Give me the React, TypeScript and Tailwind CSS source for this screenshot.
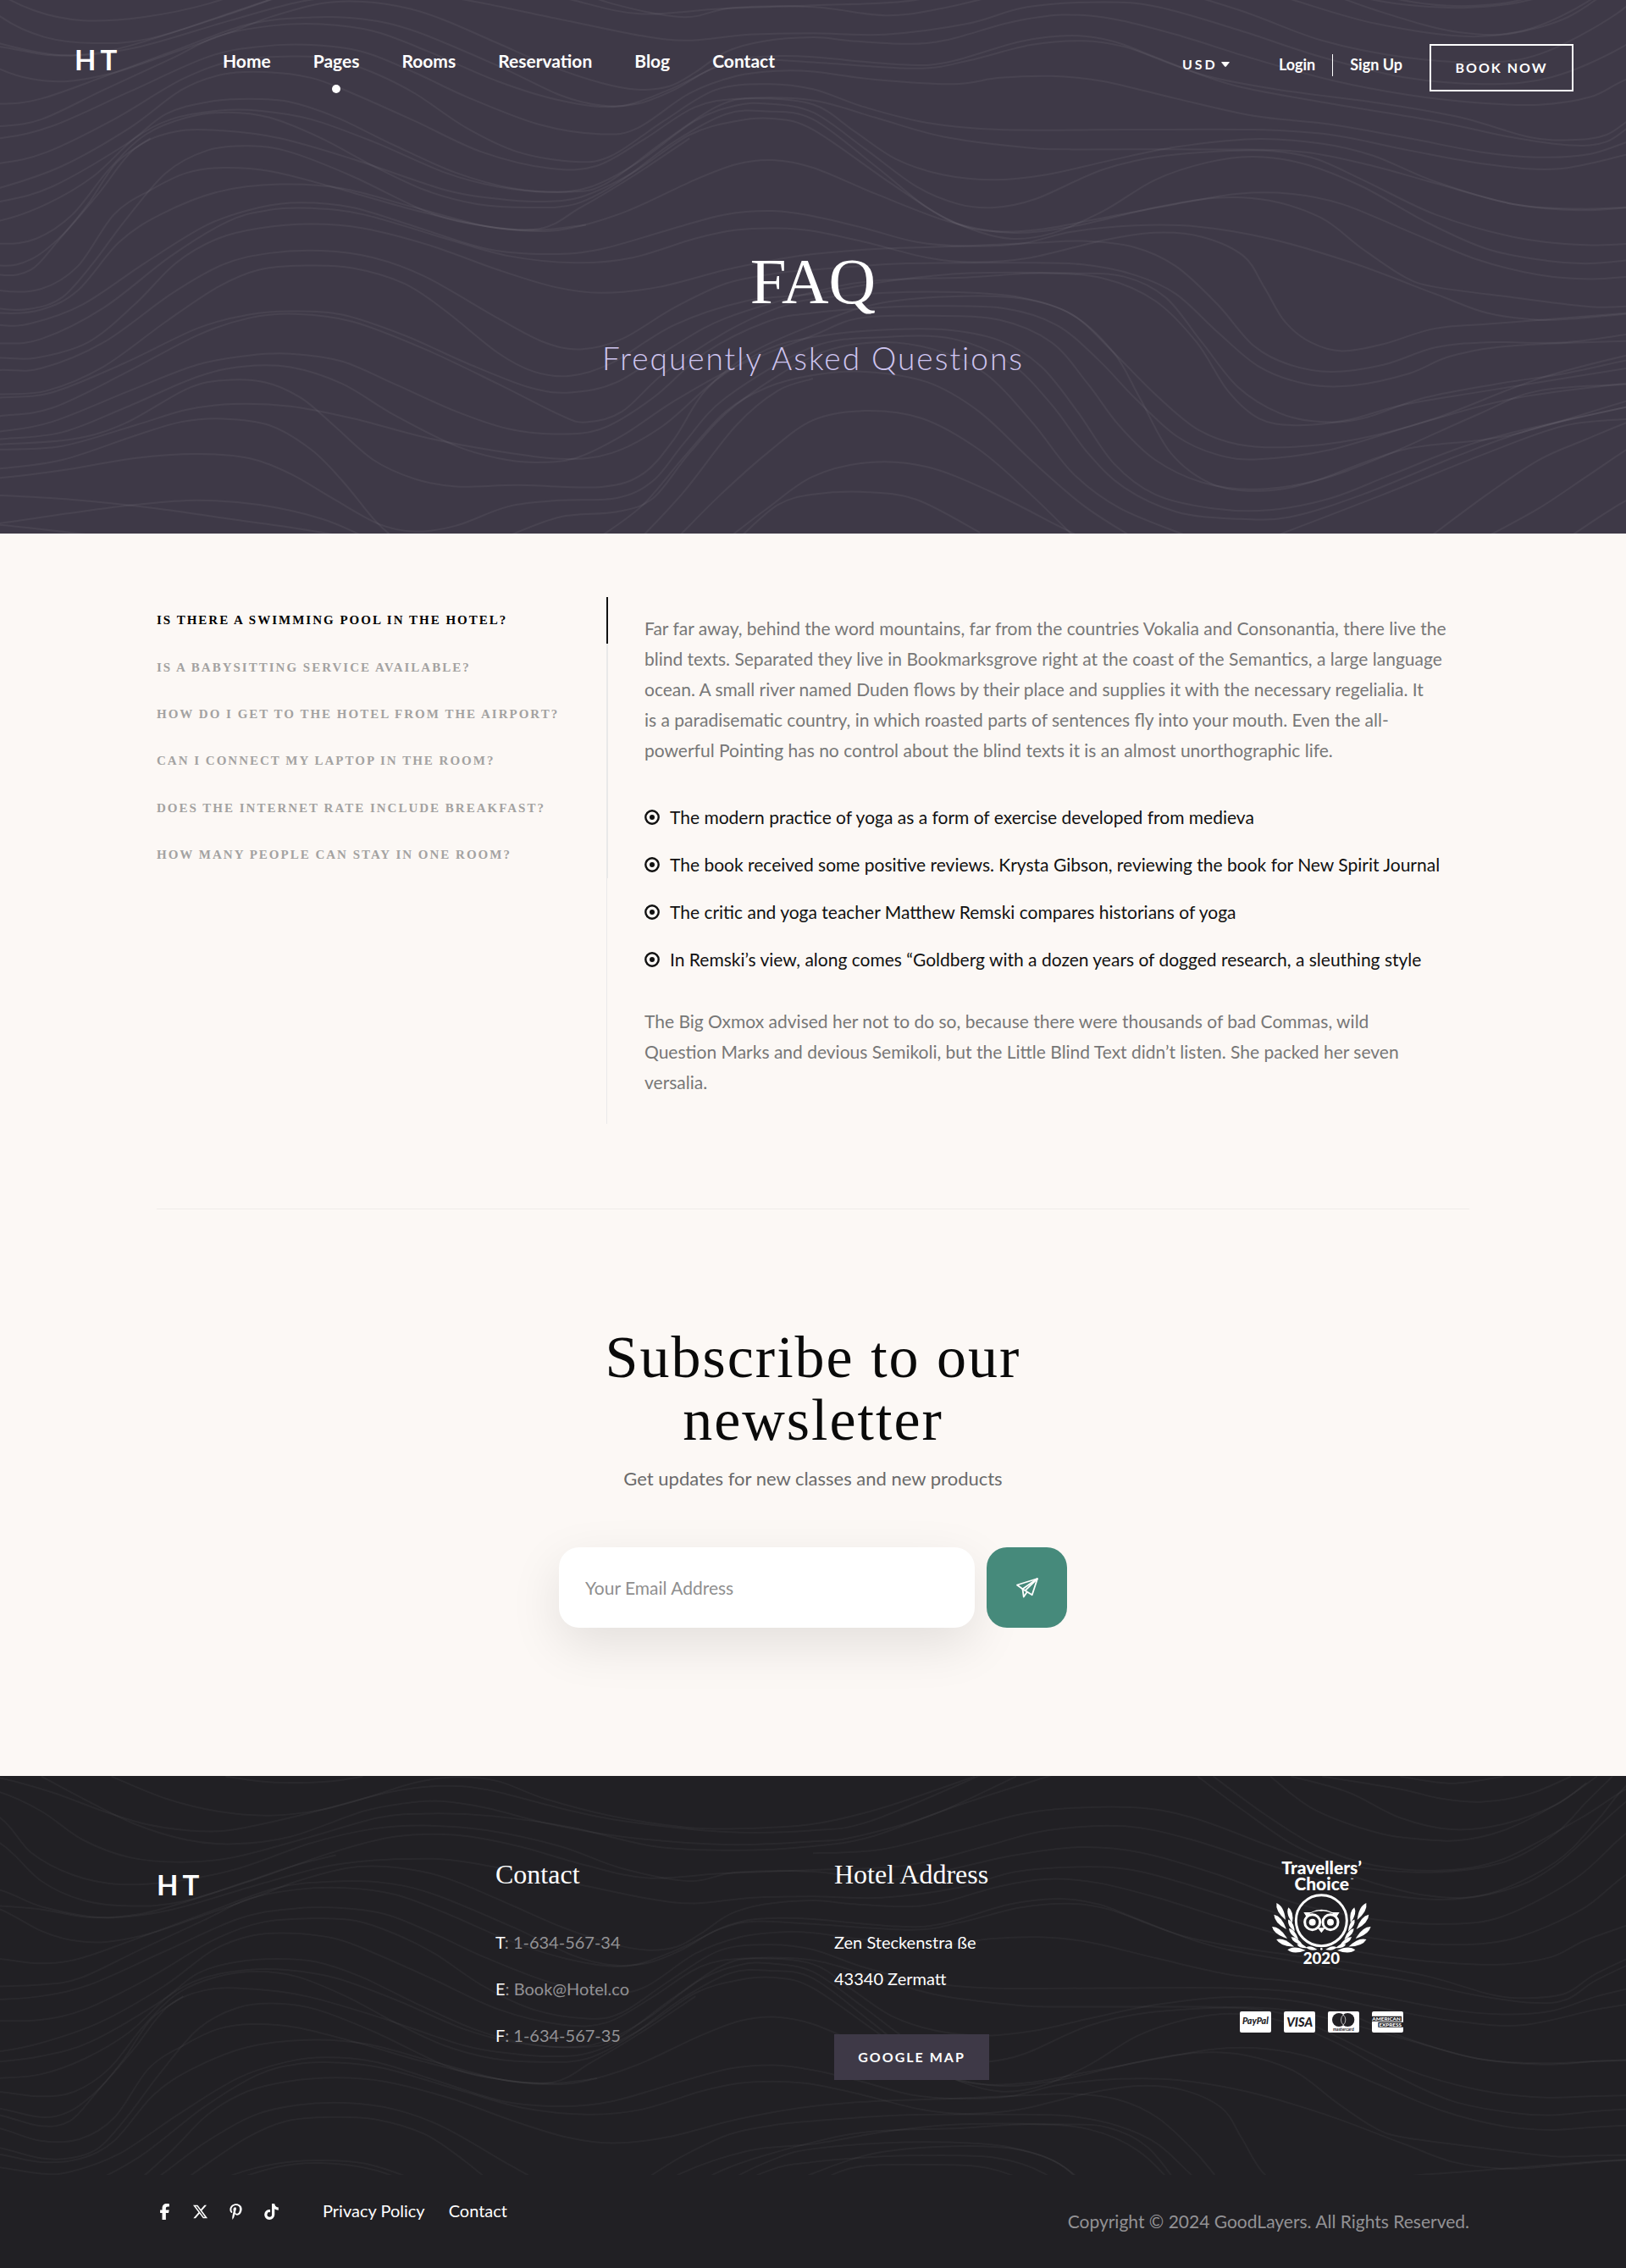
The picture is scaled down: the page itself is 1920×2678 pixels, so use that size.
import { useState } from "react";
import { FaFacebookF, FaPinterestP, FaTiktok, FaXTwitter } from "react-icons/fa6";

type Pt = [number, number];

/* Contour lines, drawn on a 3136 x 1543 canvas that is stretched over a section. */
const LINES: Pt[][] = [
  [[0, 135], [100, 160], [200, 150], [300, 110], [420, 50], [520, 0], [600, -30]],
  [[-90, 130], [0, 200], [60, 228], [130, 235], [220, 210], [320, 160], [450, 90], [520, 50], [620, 10], [700, 5], [790, 25], [860, 60], [960, 125], [1060, 190], [1160, 240], [1230, 259], [1290, 250], [1340, 210], [1400, 150], [1470, 120], [1568, 108], [1640, 118], [1748, 127], [1828, 115], [1948, 65], [2048, 43], [2148, 55], [2268, 100], [2418, 170], [2568, 232], [2718, 275], [2848, 297], [2968, 303], [3068, 280], [3136, 230]],
  [[-90, 285], [0, 300], [80, 285], [200, 222], [330, 150], [480, 70], [600, 50], [700, 55], [800, 90], [960, 190], [1080, 275], [1160, 305], [1230, 300], [1300, 260], [1370, 200], [1430, 170], [1500, 162], [1568, 165], [1738, 187], [1828, 180], [1968, 120], [2068, 103], [2148, 120], [2228, 165], [2328, 220], [2468, 260], [2668, 300], [2818, 340], [2948, 396], [3028, 405], [3098, 390], [3160, 330]],
  [[-90, 370], [0, 365], [80, 345], [200, 260], [330, 170], [420, 105], [520, 75], [620, 70], [720, 90], [820, 145], [960, 235], [1080, 290], [1190, 308], [1290, 260], [1380, 195], [1450, 172], [1568, 180], [1768, 198], [1868, 175], [1988, 130], [2088, 118], [2168, 135], [2268, 190], [2388, 250], [2568, 300], [2768, 350], [2908, 395], [3028, 420], [3098, 410], [3160, 350]],
  [[-90, 410], [0, 400], [100, 365], [250, 265], [400, 165], [500, 135], [600, 130], [700, 150], [800, 210], [900, 280], [1040, 360], [1160, 388], [1230, 370], [1330, 270], [1420, 220], [1500, 205], [1568, 207], [1688, 230], [1838, 243], [1928, 225], [2028, 220], [2128, 235], [2268, 285], [2418, 335], [2568, 360], [2718, 400], [2858, 440], [2968, 455], [3068, 445], [3160, 400]],
  [[-90, 475], [0, 472], [90, 440], [220, 345], [350, 230], [450, 175], [560, 163], [640, 170], [720, 210], [800, 270], [900, 370], [1000, 440], [1110, 468], [1180, 450], [1280, 350], [1380, 260], [1480, 243], [1568, 258], [1668, 310], [1788, 355], [1928, 375], [2168, 375], [2418, 375], [2568, 390], [2718, 435], [2868, 475], [3008, 488], [3160, 440]],
  [[-90, 570], [0, 543], [120, 480], [250, 370], [350, 260], [430, 215], [510, 208], [600, 225], [680, 270], [800, 350], [930, 440], [1060, 487], [1150, 480], [1240, 405], [1340, 310], [1430, 285], [1568, 290], [1688, 340], [1818, 395], [1968, 425], [2068, 432], [2368, 432], [2518, 440], [2648, 480], [2768, 530], [2918, 590], [3048, 608], [3160, 598]],
  [[-90, 600], [0, 583], [100, 540], [240, 420], [320, 330], [400, 295], [480, 286], [560, 295], [650, 340], [760, 420], [880, 500], [990, 545], [1100, 555], [1170, 530], [1280, 410], [1380, 310], [1450, 285], [1568, 302], [1648, 380], [1728, 460], [1818, 505], [1918, 520], [2018, 505], [2138, 465], [2268, 425], [2418, 402], [2548, 415], [2648, 450], [2768, 525], [2918, 590], [3048, 604], [3160, 598]],
  [[-90, 650], [0, 638], [90, 590], [180, 510], [260, 400], [330, 345], [420, 320], [500, 320], [600, 345], [720, 410], [860, 500], [960, 540], [1060, 555], [1140, 540], [1230, 470], [1340, 350], [1420, 305], [1480, 300], [1568, 325], [1668, 430], [1768, 540], [1848, 590], [1918, 600], [1998, 575], [2128, 490], [2248, 450], [2418, 435], [2528, 455], [2628, 520], [2768, 620], [2918, 685], [3048, 708], [3160, 704]],
  [[-90, 690], [0, 705], [70, 690], [140, 620], [210, 490], [280, 390], [360, 340], [440, 325], [520, 340], [620, 400], [720, 480], [820, 550], [920, 590], [1020, 600], [1110, 590], [1200, 520], [1300, 410], [1400, 330], [1480, 322], [1568, 345], [1688, 480], [1788, 600], [1868, 660], [1948, 690], [2028, 675], [2128, 610], [2228, 520], [2328, 470], [2418, 453], [2518, 475], [2628, 540], [2748, 640], [2868, 720], [2988, 755], [3068, 762], [3160, 750]],
  [[-90, 740], [0, 768], [60, 750], [120, 680], [190, 560], [260, 430], [340, 380], [430, 378], [540, 400], [680, 460], [860, 550], [960, 575], [1040, 583], [1120, 570], [1220, 500], [1330, 390], [1420, 350], [1490, 343], [1568, 375], [1718, 530], [1828, 635], [1908, 668], [2008, 663], [2128, 630], [2268, 590], [2388, 560], [2488, 560], [2588, 590], [2718, 670], [2848, 750], [2968, 795], [3068, 807], [3160, 798]],
  [[-90, 760], [0, 795], [60, 780], [110, 700], [170, 590], [225, 470], [290, 400]],
  [[-90, 800], [0, 840], [80, 835], [150, 770], [220, 620], [290, 550], [360, 500], [430, 485], [520, 495], [640, 540], [780, 600], [920, 650], [1020, 668], [1100, 660], [1210, 610], [1340, 520], [1420, 475], [1490, 463], [1568, 485], [1688, 560], [1828, 640], [1948, 673], [2068, 655], [2228, 600], [2348, 572], [2448, 580], [2548, 630], [2628, 720], [2708, 800], [2768, 830], [2918, 860], [3068, 887], [3160, 885]],
  [[-90, 860], [0, 893], [60, 893], [120, 860], [180, 760], [240, 640], [320, 500], [400, 435], [480, 422], [560, 440], [680, 510], [820, 610], [920, 650], [1040, 662], [1120, 600], [1220, 510], [1330, 400]],
  [[-90, 880], [0, 905], [80, 895], [150, 840], [230, 700], [310, 620], [420, 555], [540, 533], [660, 545], [800, 600], [940, 655], [1040, 665], [1130, 650]],
  [[-90, 920], [0, 940], [60, 935], [160, 880], [280, 760], [400, 650], [500, 600], [580, 586], [680, 600], [800, 655], [940, 720], [1060, 735], [1160, 720], [1300, 660], [1400, 620], [1490, 610], [1568, 625], [1668, 660], [1768, 700], [1868, 712], [1968, 705], [2068, 670], [2188, 652], [2308, 655], [2448, 690], [2608, 760], [2768, 850], [2868, 905], [2968, 925], [3048, 920], [3160, 905]],
  [[-90, 985], [0, 993], [80, 980], [200, 890], [330, 740], [440, 640], [520, 607], [600, 602], [700, 620], [860, 690], [980, 740], [1110, 760], [1220, 745], [1340, 690], [1420, 665], [1500, 660], [1568, 668], [1668, 700], [1788, 745], [1878, 758], [1988, 745], [2128, 695], [2228, 673], [2318, 685], [2398, 740], [2438, 830], [2478, 930], [2528, 990], [2588, 1015], [2668, 995], [2768, 950], [2888, 935], [3160, 903]],
  [[0, 1035], [70, 1035], [170, 990], [260, 880], [340, 760], [420, 690], [500, 660], [600, 648], [700, 660], [830, 710], [960, 780], [1070, 830], [1160, 847], [1270, 830], [1400, 780], [1500, 750], [1568, 735], [1688, 720], [1848, 712], [1988, 703], [2088, 697], [2188, 715], [2268, 770], [2348, 880], [2418, 1000], [2488, 1055], [2568, 1075], [2668, 1055], [2768, 1005], [2868, 990], [3018, 990], [3160, 963]],
  [[0, 1070], [80, 1065], [200, 990], [330, 850], [430, 765], [520, 732], [620, 725], [720, 745], [820, 800], [960, 920], [1050, 990], [1120, 1010], [1200, 980], [1300, 890], [1400, 820], [1500, 790], [1568, 780], [1748, 762], [1968, 760], [2088, 765], [2188, 795], [2268, 850], [2348, 960], [2428, 1060], [2518, 1110], [2608, 1115], [2718, 1080], [2798, 1030], [2918, 1000], [3160, 985]],
  [[0, 1140], [90, 1130], [200, 1060], [320, 930], [420, 830], [500, 780], [590, 768], [680, 775], [780, 820], [860, 900], [960, 1020], [1030, 1075], [1100, 1087], [1180, 1050], [1300, 940], [1440, 870], [1568, 850], [1718, 812], [1868, 790], [2068, 790], [2168, 800], [2248, 860], [2318, 990], [2388, 1120], [2468, 1195], [2548, 1220], [2628, 1210], [2748, 1150], [2888, 1110], [3018, 1080], [3160, 1035]],
  [[0, 1150], [100, 1135], [240, 1050], [380, 950], [480, 910], [560, 900], [660, 910], [780, 970], [900, 1050], [1020, 1120], [1100, 1135], [1190, 1105], [1300, 1000], [1400, 920], [1568, 845], [1688, 812], [1868, 802], [2008, 790], [2128, 805], [2228, 870], [2308, 990], [2368, 1130], [2428, 1210], [2498, 1230], [2598, 1215], [2708, 1170], [2868, 1130], [3160, 1060]],
  [[0, 1203], [100, 1180], [240, 1080], [380, 970], [480, 920], [570, 908], [680, 930], [820, 1010], [960, 1110], [1080, 1200], [1130, 1221], [1200, 1190], [1280, 1080], [1400, 960], [1500, 890], [1568, 865], [1708, 847], [1848, 845], [1968, 860], [2068, 910], [2148, 1020], [2228, 1140], [2308, 1240], [2388, 1285], [2488, 1293], [2618, 1270], [2768, 1210], [2968, 1095], [3160, 1020]],
  [[0, 1248], [100, 1220], [250, 1130], [380, 1055], [480, 1028], [560, 1023], [660, 1045], [760, 1110], [880, 1190], [980, 1240], [1070, 1255], [1160, 1240], [1260, 1150], [1360, 1020], [1480, 930], [1568, 905], [1688, 890], [1798, 885], [1938, 892], [2038, 940], [2118, 1040], [2188, 1150], [2268, 1260], [2348, 1315], [2428, 1328], [2568, 1300], [2748, 1220], [2928, 1150], [3160, 1105]],
  [[0, 1270], [120, 1250], [240, 1180], [380, 1090], [470, 1060], [560, 1062], [660, 1110], [760, 1200], [880, 1290], [960, 1325], [1030, 1337], [1110, 1325], [1200, 1260], [1300, 1160], [1420, 1060], [1568, 970], [1658, 920], [1798, 913], [1928, 925], [2028, 990], [2098, 1110], [2158, 1230], [2228, 1330], [2318, 1395], [2418, 1415], [2538, 1390], [2668, 1320], [2848, 1200], [2968, 1130], [3160, 1110]],
  [[0, 1285], [140, 1270], [240, 1225], [360, 1125], [430, 1100], [510, 1105], [580, 1150], [640, 1225], [720, 1330], [800, 1385], [880, 1407], [1000, 1403], [1160, 1408], [1240, 1370], [1300, 1270], [1360, 1130], [1450, 1020], [1568, 940], [1688, 880], [1828, 858], [1968, 863], [2068, 910], [2148, 1020], [2198, 1150], [2258, 1310], [2338, 1400], [2428, 1420], [2528, 1395], [2708, 1300], [2908, 1260], [3160, 1150]],
  [[0, 1300], [120, 1290], [260, 1230], [360, 1185], [450, 1168], [560, 1175], [680, 1210], [820, 1265], [940, 1300], [1080, 1327], [1180, 1310], [1280, 1230], [1380, 1100], [1480, 1010], [1568, 975], [1688, 955], [1818, 953], [1928, 985], [2008, 1060], [2078, 1190], [2148, 1340], [2228, 1430], [2338, 1470], [2448, 1475], [2568, 1440], [2688, 1370], [2868, 1270], [3160, 1170]],
  [[0, 1355], [120, 1330], [260, 1260], [350, 1220], [430, 1211], [520, 1230], [600, 1300], [660, 1390], [720, 1500], [755, 1550]],
  [[0, 1382], [120, 1360], [260, 1325], [380, 1313], [480, 1325], [560, 1370], [640, 1440], [730, 1515], [800, 1537], [880, 1520], [980, 1465], [1080, 1447], [1190, 1440], [1260, 1390], [1320, 1280], [1400, 1150], [1568, 1003], [1708, 975], [1838, 980], [1948, 1050], [2028, 1170], [2098, 1310], [2168, 1410], [2268, 1480], [2378, 1500], [2488, 1495], [2628, 1430], [2808, 1320], [2958, 1240], [3160, 1170]],
  [[0, 1433], [140, 1445], [300, 1470], [440, 1500], [560, 1525], [660, 1550]],
  [[0, 1513], [130, 1485], [260, 1460], [380, 1447], [500, 1460], [620, 1500], [700, 1550]],
  [[0, 1518], [190, 1550]],
  [[980, 1550], [1080, 1495], [1190, 1480], [1260, 1440], [1330, 1310], [1420, 1170], [1568, 1030], [1688, 990], [1800, 1010], [1900, 1080], [1990, 1220], [2070, 1370], [2160, 1470], [2290, 1550]],
  [[1160, 1550], [1240, 1460], [1320, 1320], [1400, 1190], [1480, 1120], [1568, 1085], [1668, 1075], [1788, 1105], [1888, 1190], [1988, 1330], [2088, 1460], [2180, 1550]],
  [[1240, 1550], [1320, 1420], [1420, 1230], [1500, 1130], [1568, 1095]],
  [[1310, 1550], [1390, 1430], [1480, 1310], [1568, 1215], [1668, 1188], [1778, 1210], [1888, 1300], [1988, 1430], [2070, 1550]],
  [[1410, 1550], [1480, 1470], [1568, 1378], [1678, 1337], [1788, 1350], [1908, 1420], [2040, 1520], [2080, 1550]],
  [[1430, 1550], [1500, 1460], [1568, 1430], [1668, 1423], [1768, 1445], [1890, 1540]],
  [[2460, 1550], [2668, 1430], [2868, 1310], [3020, 1230], [3160, 1210]],
  [[2760, 1550], [2868, 1430], [2968, 1330], [3060, 1270], [3160, 1210]],
  [[2870, 1550], [2968, 1470], [3068, 1370], [3160, 1280]],
  [[3030, 1550], [3100, 1480], [3160, 1430]],
];

/* The uppermost lines, which reach past the top edge of the canvas. */
const TOP_LINES: Pt[][] = [
  [[0, 25], [100, 70], [200, 130], [280, 170], [360, 190], [440, 190], [560, 150], [700, 90], [800, 40], [880, 22], [960, 35], [1050, 90], [1180, 145], [1320, 180], [1420, 185], [1568, 170], [1700, 120], [1880, 20]],
  [[80, 20], [160, 90], [260, 170], [360, 220], [450, 233], [560, 210], [700, 130], [780, 105], [850, 98], [940, 120], [1060, 170], [1200, 210], [1400, 235], [1568, 225], [1650, 210], [1800, 140], [1960, 20]],
  [[215, 20], [320, 90], [420, 130], [520, 143], [620, 125], [750, 70], [850, 50], [940, 62], [1080, 120], [1200, 160], [1400, 195], [1568, 190], [1680, 160], [1900, 10]],
  [[0, 70], [80, 130], [160, 220], [250, 275], [350, 290], [450, 275], [600, 210], [730, 150], [830, 137], [950, 145], [1100, 180], [1260, 240], [1420, 253], [1568, 240], [1680, 210], [1850, 110], [2040, 10]],
  [[0, 150], [60, 260], [140, 330], [230, 360], [340, 350], [460, 310], [600, 230], [720, 185], [820, 175], [940, 190], [1080, 240], [1200, 310], [1330, 350], [1420, 322], [1568, 320], [1700, 345], [1800, 325], [1950, 270], [2080, 243], [2200, 260], [2350, 330], [2500, 420], [2650, 470], [2790, 485], [2900, 460], [3040, 340], [3136, 200]],
  [[0, 230], [80, 350], [160, 410], [250, 428], [350, 415], [500, 340], [640, 260], [760, 210], [880, 205], [1000, 240], [1130, 300], [1250, 340], [1400, 325], [1568, 315], [1750, 300], [1900, 240], [2020, 190], [2170, 177], [2300, 220], [2450, 300], [2600, 370], [2770, 408], [2900, 380], [3000, 300], [3136, 100]],
  [[0, 378], [80, 430], [200, 465], [330, 440], [500, 360], [640, 300], [780, 280], [900, 290], [1100, 355], [1250, 405], [1340, 420], [1450, 402], [1568, 398], [1700, 402], [1850, 370], [1960, 320], [2100, 305], [2200, 320], [2350, 390], [2500, 470], [2650, 530], [2800, 550], [2920, 530], [3050, 440], [3136, 330]],
  [[1568, 262], [1700, 250], [1850, 190], [2000, 130], [2180, 117], [2300, 150], [2450, 240], [2600, 330], [2750, 395], [2870, 390], [3000, 290], [3080, 160], [3136, 50]],
  [[435, 20], [500, 35], [560, 40], [640, 35], [700, 20]],
  [[2310, 20], [2400, 130], [2500, 240], [2600, 300], [2760, 322], [2900, 290], [3000, 200], [3060, 100], [3110, 20]],
  [[2340, 20], [2440, 140], [2540, 240], [2650, 300], [2780, 316], [2900, 280], [3050, 150], [3136, 60]],
  [[2450, 20], [2530, 120], [2640, 190], [2720, 215], [2810, 222], [2900, 190], [3000, 110], [3080, 20]],
  [[2490, 20], [2600, 70], [2700, 150], [2800, 187], [2900, 170], [3000, 110], [3060, 40]],
  [[2550, 20], [2700, 60], [2780, 90], [2860, 100], [2950, 75], [3030, 20]],
  [[2700, 20], [2800, 42], [2900, 20]],
];

/* Carries a line that stops at the left or right edge a little further out. */
function extend(p: Pt[]): Pt[] {
  const out = [...p];
  const [a, b] = p;
  const [y, z] = p.slice(-2);
  if (a[0] <= 0) out.unshift([a[0] - 110, a[1] - ((b[1] - a[1]) * 50) / (b[0] - a[0])]);
  if (z[0] >= 3130) out.push([z[0] + 110, z[1] + ((z[1] - y[1]) * 80) / (z[0] - y[0])]);
  return out;
}

function smooth(line: Pt[]): string {
  const p = extend(line);
  let d = `M${p[0][0]} ${p[0][1]}`;
  for (let i = 0; i < p.length - 1; i++) {
    const a = p[i - 1] ?? p[i];
    const b = p[i];
    const c = p[i + 1];
    const e = p[i + 2] ?? c;
    d += `C${b[0] + (c[0] - a[0]) / 6} ${b[1] + (c[1] - a[1]) / 6} ${c[0] - (e[0] - b[0]) / 6} ${c[1] - (e[1] - b[1]) / 6} ${c[0]} ${c[1]}`;
  }
  return d;
}

function Waves({ viewBox, className }: { viewBox: string; className: string }) {
  return (
    <svg
      aria-hidden="true"
      viewBox={viewBox}
      preserveAspectRatio="none"
      className={className}
      fill="none"
      stroke="currentColor"
      strokeWidth="2"
    >
      {LINES.map((l, i) => (
        <path key={i} d={smooth(l)} vectorEffect="non-scaling-stroke" />
      ))}
      <g transform="matrix(1.0526 0 0 0.967 -82 -289)">
        {TOP_LINES.map((l, i) => (
          <path key={i} d={smooth(l)} vectorEffect="non-scaling-stroke" />
        ))}
      </g>
    </svg>
  );
}

const NAV = ["Home", "Pages", "Rooms", "Reservation", "Blog", "Contact"];

const QUESTIONS = [
  "Is there a swimming pool in the hotel?",
  "Is a babysitting service available?",
  "How do I get to the hotel from the airport?",
  "Can I connect my laptop in the room?",
  "Does the internet rate include breakfast?",
  "How many people can stay in one room?",
];

const INTRO = [
  "Far far away, behind the word mountains, far from the countries Vokalia and Consonantia, there live the",
  "blind texts. Separated they live in Bookmarksgrove right at the coast of the Semantics, a large language",
  "ocean. A small river named Duden flows by their place and supplies it with the necessary regelialia. It",
  "is a paradisematic country, in which roasted parts of sentences fly into your mouth. Even the all-",
  "powerful Pointing has no control about the blind texts it is an almost unorthographic life.",
];

const POINTS = [
  "The modern practice of yoga as a form of exercise developed from medieva",
  "The book received some positive reviews. Krysta Gibson, reviewing the book for New Spirit Journal",
  "The critic and yoga teacher Matthew Remski compares historians of yoga",
  "In Remski’s view, along comes “Goldberg with a dozen years of dogged research, a sleuthing style",
];

const OUTRO = [
  "The Big Oxmox advised her not to do so, because there were thousands of bad Commas, wild",
  "Question Marks and devious Semikoli, but the Little Blind Text didn’t listen. She packed her seven",
  "versalia.",
];

function Lines({ lines }: { lines: string[] }) {
  return (
    <p className="text-[21px] leading-9 text-[#777777]">
      {lines.map((l) => (
        <span key={l} className="block">
          {l}
        </span>
      ))}
    </p>
  );
}

function Header() {
  return (
    <header className="relative flex items-start pl-[88px] pr-[62px]">
      <a href="#" className="mt-[50px] w-[175px] text-[33px] font-bold leading-10 tracking-[5px]">
        HT
      </a>
      <nav className="mt-[60px] flex gap-[50px] text-[21px] font-bold leading-6">
        {NAV.map((n) => (
          <a key={n} href="#" className="flex flex-col items-center">
            {n}
            {n === "Pages" && <span className="mt-4 size-[10px] rounded-full bg-white" />}
          </a>
        ))}
      </nav>
      <div className="ml-auto mt-[52px] flex items-start">
        <div className="mt-3 flex items-center">
          <select
            aria-label="Currency"
            className="appearance-none bg-transparent text-base font-bold leading-6 tracking-[3px] text-white"
          >
            <option>USD</option>
          </select>
          <svg viewBox="0 0 10 6" className="ml-1 h-[6px] w-[10px]" fill="currentColor" aria-hidden="true">
            <path d="M1 0h8q1.400 0 .5 1L5.800 5.500q-.8.8-1.600 0L.5 1Q-.4 0 1 0Z" />
          </svg>
        </div>
        <a href="#" className="ml-[58px] mt-3 text-lg font-bold leading-6">
          Login
        </a>
        <span className="mx-5 mt-3 h-[26px] w-px bg-white" />
        <a href="#" className="mt-3 text-lg font-bold leading-6">
          Sign Up
        </a>
        <button
          type="button"
          className="ml-8 h-14 w-[170px] border-2 border-white text-base font-bold leading-6 tracking-[2px]"
        >
          BOOK NOW
        </button>
      </div>
    </header>
  );
}

function Hero() {
  return (
    <section className="relative h-[630px] overflow-hidden bg-[#3e3947] text-white">
      <Waves viewBox="0 0 3136 1543" className="absolute inset-0 size-full text-white/5" />
      <Header />
      <div className="relative pt-[177px] text-center">
        <h1 className="font-['Liberation_Serif',serif] text-[77px] leading-[90px]">FAQ</h1>
        <p className="mt-5 text-[37px] font-light leading-[52px] tracking-[2px] text-[#cfc5f0]">
          Frequently Asked Questions
        </p>
      </div>
    </section>
  );
}

function Faq() {
  const [active, setActive] = useState(0);
  return (
    <section className="mx-auto max-w-[1550px] pt-[75px]">
      <div className="flex items-start">
        <div className="relative z-10 grid h-[332px] w-[533px] shrink-0 grid-rows-6">
          {QUESTIONS.map((q, i) => (
            <button
              key={q}
              type="button"
              onClick={() => setActive(i)}
              className={
                i === active
                  ? "w-full border-r-2 border-[#111111] text-left font-['Liberation_Serif',serif] text-[15px] font-bold uppercase tracking-[2px] text-black"
                  : "w-full border-r-2 border-[#e9e9e9] text-left font-['Liberation_Serif',serif] text-[15px] font-bold uppercase tracking-[2px] text-[#a3a2a1]"
              }
            >
              {q}
            </button>
          ))}
        </div>
        <div className="-ml-[2px] border-l border-[#e9e9e9] pb-[31px] pl-11 pt-[19px]">
          <Lines lines={INTRO} />
          <ul className="mt-[33px] mb-[27px] text-[21px] leading-14 text-[#111111]">
            {POINTS.map((p) => (
              <li key={p} className="flex items-center gap-3">
                <svg viewBox="0 0 18 18" className="size-[18px] shrink-0" aria-hidden="true">
                  <circle cx="9" cy="9" r="7.700" fill="none" stroke="currentColor" strokeWidth="2.400" />
                  <circle cx="9" cy="9" r="3" fill="currentColor" />
                </svg>
                {p}
              </li>
            ))}
          </ul>
          <Lines lines={OUTRO} />
        </div>
      </div>
      <hr className="mt-[100px] border-[#efecea]" />
    </section>
  );
}

function Newsletter() {
  return (
    <section className="pb-[175px] pt-[138px] text-center">
      <h2 className="mx-auto max-w-[560px] font-['Liberation_Serif',serif] text-[70px] leading-[74px] tracking-[2px] text-[#0a0a0a]">
        Subscribe to our
        <br />
        newsletter
      </h2>
      <p className="mt-4 text-[22px] leading-8 text-[#6a6a6a]">Get updates for new classes and new products</p>
      <form className="mt-[65px] flex justify-center gap-[14px]" onSubmit={(e) => e.preventDefault()}>
        <input
          type="email"
          aria-label="Email address"
          placeholder="Your Email Address"
          className="h-[95px] w-[491px] rounded-3xl bg-white px-[31px] text-[21px] shadow-[0_20px_60px_rgba(0,0,0,0.1)] placeholder:text-[#8f8f8f]"
        />
        <button
          type="submit"
          aria-label="Subscribe"
          className="flex size-[95px] items-center justify-center rounded-3xl bg-[#468a7b] text-white"
        >
          <svg viewBox="0 0 26 24" className="h-6 w-[26px]" fill="none" stroke="currentColor" strokeWidth="1.800" strokeLinejoin="round" aria-hidden="true">
            <path d="M25 1 1 8.500l6.500 4.800 11.200 6.900L25 1Z" />
            <path d="M25 1 7.500 13.300 8.800 22.500l4-5.800" />
            <path d="M25 1 10.500 15.200" />
          </svg>
        </button>
      </form>
    </section>
  );
}

/* Laurel leaves of the left branch: centre, half length, half width, rotation. */
const LEAVES: [number, number, number, number, number][] = [
  [29, 180, 34, 9, 62],
  [62, 193, 28, 8, 76],
  [26, 217, 34, 9, 50],
  [24, 255, 34, 9, 38],
  [66, 230, 24, 7, 62],
  [44, 292, 34, 9, 22],
  [74, 260, 26, 7, 50],
  [86, 286, 26, 7, 35],
  [84, 317, 32, 9, 2],
  [104, 303, 20, 6, 20],
  [138, 311, 20, 6, 12],
];

function Badge() {
  return (
    <svg viewBox="0 0 345 366" className="h-[122px] w-[115px] overflow-visible" fill="#fff" role="img" aria-label="Travellers' Choice 2020">
      <g fontFamily="Lato, sans-serif" fontWeight="900" textAnchor="middle">
        <text x="173" y="48" fontSize="63">Travellers’</text>
        <text x="173" y="106" fontSize="63">Choice</text>
        <text x="281" y="72" fontSize="13">™</text>
        <text x="172" y="365" fontSize="56">2020</text>
      </g>
      <circle cx="172" cy="212" r="90" fill="none" stroke="#fff" strokeWidth="9" />
      <path d="M109 183h26q37-19 75 0h26l-9 14-17-10q-21-11-39-8-19-3-38 8l-15 10Z" />
      <circle cx="140" cy="218" r="27" fill="none" stroke="#fff" strokeWidth="9" />
      <circle cx="204" cy="218" r="27" fill="none" stroke="#fff" strokeWidth="9" />
      <circle cx="140" cy="218" r="12" />
      <circle cx="204" cy="218" r="12" />
      <path d="M158 238h28l-14 18Z" />
      {LEAVES.map(([x, y, a, b, r]) => (
        <path
          key={`${x}-${y}`}
          d={`M${-a} 0Q${-a / 3} ${-b * 2} ${a} 0Q${-a / 3} ${b * 2} ${-a} 0Z`}
          transform={`translate(${x} ${y}) rotate(${r})`}
        />
      ))}
      <g transform="translate(344 0) scale(-1 1)">
        {LEAVES.map(([x, y, a, b, r]) => (
          <path
            key={`${x}-${y}`}
            d={`M${-a} 0Q${-a / 3} ${-b * 2} ${a} 0Q${-a / 3} ${b * 2} ${-a} 0Z`}
            transform={`translate(${x} ${y}) rotate(${r})`}
          />
        ))}
      </g>
      <circle cx="172" cy="313" r="4" />
    </svg>
  );
}

function Payments() {
  return (
    <div className="mt-14 flex gap-[15px]">
      <svg viewBox="0 0 111 75" className="h-[25px] w-[37px]" role="img" aria-label="PayPal">
        <rect width="111" height="75" rx="6" fill="#fff" />
        <text x="55" y="46" fontSize="32" fontStyle="italic" fontWeight="900" fontFamily="Lato, sans-serif" textAnchor="middle" fill="#212024">PayPal</text>
      </svg>
      <svg viewBox="0 0 111 75" className="h-[25px] w-[37px]" role="img" aria-label="Visa">
        <rect width="111" height="75" rx="6" fill="#fff" />
        <text x="56" y="53" fontSize="44" fontStyle="italic" fontWeight="900" fontFamily="Lato, sans-serif" textAnchor="middle" fill="#212024">VISA</text>
      </svg>
      <svg viewBox="0 0 111 75" className="h-[25px] w-[37px]" role="img" aria-label="Mastercard">
        <rect width="111" height="75" rx="6" fill="#fff" />
        <circle cx="39" cy="30" r="24" fill="#212024" />
        <circle cx="70" cy="30" r="24" fill="#212024" />
        <path d="M54.500 12a24 24 0 0 1 0 36a24 24 0 0 1 0-36Z" fill="#212024" stroke="#fff" strokeWidth="2" />
        <text x="55" y="68" fontSize="15" fontWeight="700" fontFamily="Lato, sans-serif" textAnchor="middle" fill="#212024">mastercard</text>
      </svg>
      <svg viewBox="0 0 111 75" className="h-[25px] w-[37px]" role="img" aria-label="American Express">
        <rect width="111" height="75" rx="6" fill="#fff" />
        <path d="M0 17h105v18H0zM22 38h89v18H22z" fill="#212024" />
        <g fontSize="19" fontWeight="900" fontFamily="Lato, sans-serif" fill="#fff">
          <text x="1" y="33">AMERICAN</text>
          <text x="25" y="54">EXPRESS</text>
        </g>
      </svg>
    </div>
  );
}

const CONTACTS = [
  ["T", "1-634-567-34"],
  ["E", "Book@Hotel.co"],
  ["F", "1-634-567-35"],
];

function Footer() {
  return (
    <footer className="bg-[#212024] text-white">
      <div className="relative h-[471px] overflow-hidden">
        <Waves viewBox="-82 -271 3301 1215" className="absolute inset-0 size-full text-white/4" />
        <div className="relative mx-auto grid max-w-[1550px] grid-cols-4 gap-x-[50px] pt-[100px]">
          <a href="#" className="mt-2 text-[33px] font-bold leading-10 tracking-[5px]">
            HT
          </a>
          <div>
            <h3 className="font-['Liberation_Serif',serif] text-[32px] leading-8">Contact</h3>
            <ul className="mt-[37px] text-[20px] leading-[55px] text-[#939295]">
              {CONTACTS.map(([k, v]) => (
                <li key={k}>
                  <span className="text-white">{k}</span>: {v}
                </li>
              ))}
            </ul>
          </div>
          <div>
            <h3 className="font-['Liberation_Serif',serif] text-[32px] leading-8">Hotel Address</h3>
            <address className="mt-[43px] text-[20px] not-italic leading-[43px]">
              Zen Steckenstra ße
              <br />
              43340 Zermatt
            </address>
            <button
              type="button"
              className="mt-11 h-[54px] w-[183px] bg-[#3e3947] text-base font-bold leading-6 tracking-[2px]"
            >
              GOOGLE MAP
            </button>
          </div>
          <div className="flex flex-col items-center">
            <Badge />
            <Payments />
          </div>
        </div>
      </div>
      <div className="mx-auto flex h-[110px] max-w-[1550px] items-start text-[20px] leading-8">
        <div className="mt-[35px] flex h-4 items-center gap-[23px] text-[19px]">
          <a href="#" aria-label="Facebook"><FaFacebookF /></a>
          <a href="#" aria-label="X"><FaXTwitter /></a>
          <a href="#" aria-label="Pinterest"><FaPinterestP /></a>
          <a href="#" aria-label="TikTok"><FaTiktok /></a>
        </div>
        <div className="ml-[51px] mt-[26px] flex gap-7">
          <a href="#">Privacy Policy</a>
          <a href="#">Contact</a>
        </div>
        <p className="ml-auto mt-[39px] text-[21px] text-[#939295]">Copyright © 2024 GoodLayers. All Rights Reserved.</p>
      </div>
    </footer>
  );
}

export default function App() {
  return (
    <div className="bg-[#fcf8f5] font-['Lato',sans-serif]">
      <Hero />
      <main>
        <Faq />
        <Newsletter />
      </main>
      <Footer />
    </div>
  );
}
